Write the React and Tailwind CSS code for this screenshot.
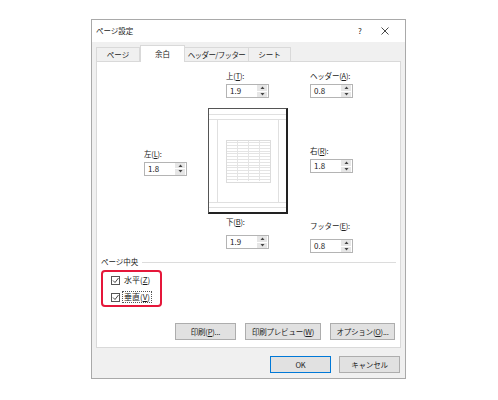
const font = "font-['Noto_Sans_CJK_JP',sans-serif]"

const Spin = ({ value }) => (
    <div className="w-[43px] h-[14px] border border-[#b4b4b4] bg-white flex items-center">
        <span className="flex-1 pl-[3px] text-[8px] leading-[12px] text-[#222]">{value}</span>
        <div className="w-[10px] h-[12px] mr-[1px] flex flex-col gap-px">
            <div className="flex-1 bg-[#e6e6e6] flex items-center justify-center">
                <svg width="5" height="3" viewBox="0 0 5 3"><path d="M0.5 3 L2.5 0.5 L4.5 3 Z" fill="#444" /></svg>
            </div>
            <div className="flex-1 bg-[#e6e6e6] flex items-center justify-center">
                <svg width="5" height="3" viewBox="0 0 5 3"><path d="M0.5 0 L2.5 2.5 L4.5 0 Z" fill="#444" /></svg>
            </div>
        </div>
    </div>
)

const Field = ({ label, keyChar, value, gap = 'mb-[3px]' }) => (
    <div className="flex flex-col">
        <div className={`h-[10px] leading-[10px] text-[7.5px] text-[#222] tracking-[-0.2px] ${gap}`}>
            {label}(<span className="underline">{keyChar}</span>):
        </div>
        <Spin value={value} />
    </div>
)

const Preview = () => {
    const rows = Array.from({ length: 15 })
    return (
        <div className="w-[80px] h-[106px] border border-[#555] border-r-2 border-b-2 border-r-[#222] border-b-[#222] bg-white flex flex-col">
            <div className="h-[6px] border-b border-[#e0e0e0]" />
            <div className="h-[5px] border-b border-[#e0e0e0]" />
            <div className="flex-1 flex">
                <div className="w-[9px] border-r border-[#e0e0e0]" />
                <div className="flex-1 flex items-center justify-center">
                    <div className="w-[45px] h-[43px] border border-[#dcdcdc] flex flex-col">
                        {rows.map((_, i) => (
                            <div key={i} className="flex-1 flex border-b border-[#e4e4e4] last:border-b-0">
                                <div className="flex-1 border-r border-[#e4e4e4]" />
                                <div className="flex-1 border-r border-[#e4e4e4]" />
                                <div className="flex-1 border-r border-[#e4e4e4]" />
                                <div className="flex-1" />
                            </div>
                        ))}
                    </div>
                </div>
                <div className="w-[8px] border-l border-[#e0e0e0]" />
            </div>
            <div className="h-[5px] border-t border-[#e0e0e0]" />
            <div className="h-[5px] border-t border-[#e0e0e0]" />
        </div>
    )
}

const Check = ({ label, keyChar, focus }) => (
    <div className="flex items-center gap-[3px] h-[14px]">
        <div className="w-[9px] h-[9px] border border-[#555] bg-white flex items-center justify-center">
            <svg width="7" height="7" viewBox="0 0 7 7"><path d="M1 3.5 L3 5.5 L6.5 1" stroke="#333" strokeWidth="0.9" fill="none" /></svg>
        </div>
        <span className={`text-[8px] leading-[10px] text-[#1a1a1a] px-px ${focus ? 'outline outline-1 outline-dotted outline-[#555]' : ''}`}>
            {label}(<span className="underline">{keyChar}</span>)
        </span>
    </div>
)

const Button = ({ children, w, primary }) => (
    <div className={`h-[17px] ${w} flex items-center justify-center text-[7.5px] text-[#222] tracking-[-0.2px] bg-[#e1e1e1] border ${primary ? 'border-[#0078d7]' : 'border-[#adadad]'}`}>
        {children}
    </div>
)

const tabs = [
    { name: 'ページ', w: 'w-[44px]' },
    { name: '余白', w: 'w-[45px]', active: true },
    { name: 'ヘッダー/フッター', w: 'w-[65px] tracking-[-0.6px]' },
    { name: 'シート', w: 'w-[43px]' },
]

export default function App() {
    return (
        <div className={`w-[498px] h-[400px] bg-white pt-[19px] pl-[91px] ${font}`}>
            <div className="w-[315px] h-[360px] border border-[#a9a9a9] bg-[#f0f0f0] flex flex-col">
                <div className="h-[22px] bg-white flex items-center pl-[4px] text-[7.5px] text-[#222]">
                    <span className="flex-1">ページ設定</span>
                    <span className="w-[10px] text-center text-[8px]">?</span>
                    <span className="w-[40px] flex justify-center">
                        <svg width="8" height="8" viewBox="0 0 8 8"><path d="M0.5 0.5 L7.5 7.5 M7.5 0.5 L0.5 7.5" stroke="#333" strokeWidth="0.9" /></svg>
                    </span>
                </div>
                <div className="h-[19px] pl-[4px] pt-[3px] flex items-end">
                    {tabs.map((t) => (
                        <div
                            key={t.name}
                            className={`${t.w} flex items-center justify-center text-[7.5px] text-[#222] border-t border-l border-r ${t.active
                                ? 'h-[17px] bg-white border-[#d9d9d9] -mb-px relative z-10'
                                : 'h-[14px] bg-[#f0f0f0] border-[#d9d9d9] -ml-px first:ml-0'
                                }`}
                        >
                            {t.name}
                        </div>
                    ))}
                </div>
                <div className="mx-[4px] h-[287px] border border-[#d9d9d9] bg-white flex flex-col">
                    <div className="flex pt-[9px] pl-[47px] h-[191px]">
                        <div className="w-[64px] flex flex-col justify-center">
                            <Field label="左" keyChar="L" value="1.8" />
                        </div>
                        <div className="w-[102px] flex flex-col">
                            <div className="pl-[18px] mb-[10px]">
                                <Field label="上" keyChar="T" value="1.9" />
                            </div>
                            <Preview />
                            <div className="pl-[18px] mt-[3px]">
                                <Field label="下" keyChar="B" value="1.9" gap="mb-[8px]" />
                            </div>
                        </div>
                        <div className="flex flex-col justify-between">
                            <Field label="ヘッダー" keyChar="A" value="0.8" />
                            <Field label="右" keyChar="R" value="1.8" />
                            <Field label="フッター" keyChar="E" value="0.8" gap="mb-[8px]" />
                        </div>
                    </div>
                    <div className="mt-[4px] pl-[4px] pr-[4px] flex items-center gap-[4px] h-[10px]">
                        <span className="text-[7.5px] text-[#222] leading-[10px]">ページ中央</span>
                        <div className="flex-1 border-t border-[#dcdcdc]" />
                    </div>
                    <div className="ml-[4px] mt-[3px] w-[61px] h-[37px] border-2 border-[#e5173a] rounded-[4px] flex flex-col justify-center pl-[8px] gap-[3px]">
                        <Check label="水平" keyChar="Z" />
                        <Check label="垂直" keyChar="V" focus />
                    </div>
                    <div className="mt-[16px] pr-[5px] flex justify-end gap-[9px]">
                        <Button w="w-[61px]">印刷(<span className="underline">P</span>)...</Button>
                        <Button w="w-[76px]">印刷プレビュー(<span className="underline">W</span>)</Button>
                        <Button w="w-[65px]">オプション(<span className="underline">O</span>)...</Button>
                    </div>
                </div>
                <div className="mt-[8px] pr-[5px] flex justify-end gap-[8px]">
                    <Button w="w-[61px]" primary>OK</Button>
                    <Button w="w-[61px]">キャンセル</Button>
                </div>
            </div>
        </div>
    )
}
